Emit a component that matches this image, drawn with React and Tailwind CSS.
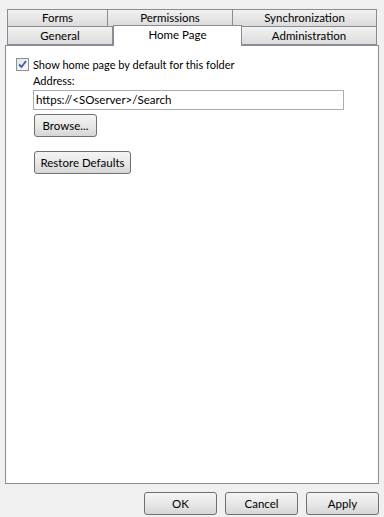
const FONT = { fontFamily: 'Lato, "Noto Sans", sans-serif' }

function Tab({ label, className = '' }) {
  return (
    <div
      className={`h-full flex items-center justify-center border border-[#898c95] bg-gradient-to-b from-[#f2f2f2] to-[#dcdcdc] text-[11.5px] text-black leading-none ${className}`}
    >
      {label}
    </div>
  )
}

function Button({ children, className = '' }) {
  return (
    <button className={`h-[23px] whitespace-nowrap rounded-[3px] border border-[#707070] bg-gradient-to-b from-[#f4f4f4] via-[#e8e8e8] to-[#d6d6d6] text-[11.5px] text-black leading-none px-1 ${className}`}>
      {children}
    </button>
  )
}

export default function App() {
  return (
    <div className="w-[384px] h-[517px] bg-[#f0f0f0] pt-[9px] px-[5px] flex flex-col overflow-hidden" style={FONT}>
      {/* tabs */}
      <div className="pl-[2px]">
        <div className="flex h-[18px]">
          <Tab label="Forms" className="w-[101px]" />
          <Tab label="Permissions" className="w-[125px] border-l-0" />
          <Tab label="Synchronization" className="w-[144px] border-l-0" />
        </div>
        <div className="flex h-[18px] items-end">
          <Tab label="General" className="w-[106px] border-t-0" />
          <div className="relative z-10 w-[129px] h-[21px] -mb-[1px] border border-b-0 border-[#898c95] bg-white flex items-start justify-center pt-[3px] text-[11.5px] leading-none">
            Home Page
          </div>
          <Tab label="Administration" className="w-[135px] border-t-0 border-l-0" />
        </div>
      </div>

      {/* panel */}
      <div className="h-[439px] w-[374px] border border-[#898c95] bg-white pl-[10px] pt-[12px] text-[11px] text-black leading-none">
        <label className="flex items-center gap-[4px] h-[13px]">
          <span className="w-[13px] h-[13px] border border-[#8e8f8f] bg-gradient-to-br from-[#e4e4e4] to-[#fafafa] flex items-center justify-center">
            <svg width="9" height="9" viewBox="0 0 9 9">
              <path d="M1 4.5 L3.5 7 L8 1" fill="none" stroke="#3c5ca8" strokeWidth="1.8" />
            </svg>
          </span>
          <span>Show home page by default for this folder</span>
        </label>
        <div className="pl-[17px] mt-[1px]">
          <div className="h-[16px] flex items-center">Address:</div>
          <div className="mt-[2px] w-[311px] h-[20px] border border-[#abadb3] flex items-center px-[2px] text-[11.5px]">
            https://&lt;SOserver&gt;/Search
          </div>
          <Button className="mt-[4px] ml-[1px] w-[63px] h-[21px]">Browse...</Button>
          <div>
            <Button className="mt-[14px] ml-[1px] w-[97px] h-[22px]">Restore Defaults</Button>
          </div>
        </div>
      </div>

      {/* footer buttons */}
      <div className="flex justify-end gap-[8px] mt-[8px]">
        <Button className="w-[73px]">OK</Button>
        <Button className="w-[73px]">Cancel</Button>
        <Button className="w-[73px]">Apply</Button>
      </div>
    </div>
  )
}
